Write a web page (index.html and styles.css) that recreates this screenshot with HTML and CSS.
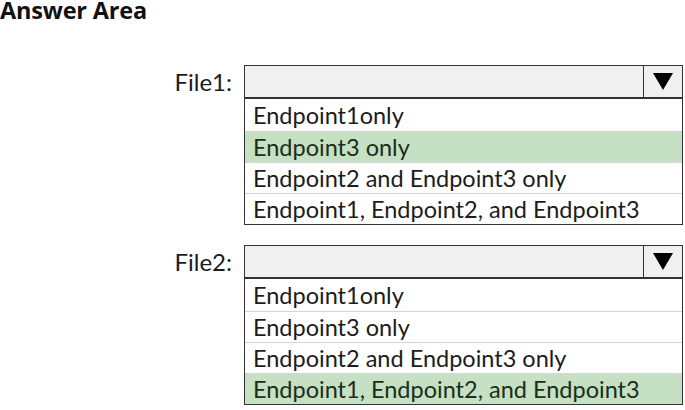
FILE: index.html
```html
<!DOCTYPE html>
<html>
<head>
<meta charset="utf-8">
<link rel="stylesheet" href="styles.css">
</head>
<body>
<h1 class="title">Answer Area</h1>
<div class="questions">
  <div class="row">
    <div class="label">File1:</div>
    <div class="dropdown">
      <div class="header">
        <div class="value"></div>
        <div class="arrow"><svg width="20" height="17" viewBox="0 0 20 17"><polygon points="0,0 20,0 10,17" fill="#000"/></svg></div>
      </div>
      <ul class="options">
        <li>Endpoint1only</li>
        <li class="selected">Endpoint3 only</li>
        <li>Endpoint2 and Endpoint3 only</li>
        <li>Endpoint1, Endpoint2, and Endpoint3</li>
      </ul>
    </div>
  </div>
  <div class="row">
    <div class="label">File2:</div>
    <div class="dropdown">
      <div class="header">
        <div class="value"></div>
        <div class="arrow"><svg width="20" height="17" viewBox="0 0 20 17"><polygon points="0,0 20,0 10,17" fill="#000"/></svg></div>
      </div>
      <ul class="options">
        <li>Endpoint1only</li>
        <li>Endpoint3 only</li>
        <li>Endpoint2 and Endpoint3 only</li>
        <li class="selected">Endpoint1, Endpoint2, and Endpoint3</li>
      </ul>
    </div>
  </div>
</div>
</body>
</html>
```

FILE: styles.css
```css
html, body {
  margin: 0;
  padding: 0;
  background: #fff;
}
body {
  font-family: Lato, "Open Sans", sans-serif;
  color: #1c1c1c;
  width: 685px;
  height: 410px;
  overflow: hidden;
}
.title {
  margin: 0;
  padding: 0;
  font-family: "Open Sans", sans-serif;
  font-weight: 700;
  font-size: 23.5px;
  line-height: 20px;
  letter-spacing: -0.2px;
  color: #111;
}
.questions {
  display: flex;
  flex-direction: column;
  gap: 20px;
  padding-top: 45px;
}
.row {
  display: flex;
  align-items: flex-start;
}
.label {
  width: 244px;
  box-sizing: border-box;
  padding-right: 12px;
  text-align: right;
  font-size: 24px;
  line-height: 34px;
}
.dropdown {
  width: 439px;
  border: 1.5px solid #333;
  box-sizing: border-box;
}
.header {
  display: flex;
  height: 31px;
  background: #f0f0f0;
  border-bottom: 2px solid #333;
}
.value {
  flex: 1;
}
.arrow {
  width: 38px;
  border-left: 1.5px solid #333;
  display: flex;
  align-items: center;
  justify-content: center;
}
.options {
  list-style: none;
  margin: 0;
  padding: 0;
}
.options li {
  height: 30px;
  line-height: 30px;
  padding-left: 8px;
  font-size: 23.5px;
  border-top: 1px solid #d4d4d4;
  white-space: nowrap;
}
.options li:first-child {
  border-top: none;
  height: 32px;
  line-height: 32px;
}
.options li.selected {
  background: #c5e0c3;
  color: #1a2e1a;
}
```
